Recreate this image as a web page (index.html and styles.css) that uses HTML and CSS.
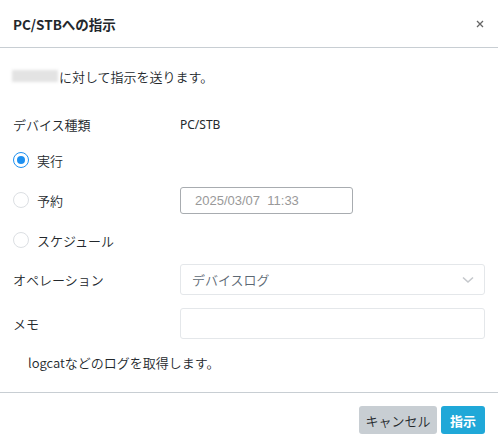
FILE: index.html
```html
<!DOCTYPE html>
<html lang="ja">
<head>
<meta charset="utf-8">
<link rel="stylesheet" href="styles.css">
</head>
<body>
<div class="modal">
  <div class="modal-header">
    <div class="title">PC/STBへの指示</div>
    <div class="close">
      <svg width="8" height="8" viewBox="0 0 8 8"><path d="M1 1L7 7M7 1L1 7" stroke="#666" stroke-width="1.3"/></svg>
    </div>
  </div>
  <div class="modal-body">
    <div class="row intro"><span class="blur"></span><span>に対して指示を送ります。</span></div>
    <div class="row device"><span class="label">デバイス種類</span><span class="value small">PC/STB</span></div>
    <div class="row radio-row r1"><span class="radio checked"></span><span>実行</span></div>
    <div class="row radio-row r2">
      <span class="label"><span class="radio"></span><span>予約</span></span>
      <div class="date-input">2025/03/07&nbsp;&nbsp;11:33</div>
    </div>
    <div class="row radio-row r3"><span class="radio"></span><span>スケジュール</span></div>
    <div class="row op">
      <span class="label">オペレーション</span>
      <div class="select">
        <span>デバイスログ</span>
        <svg width="12" height="8" viewBox="0 0 12 8"><path d="M1 1.5L6 6L11 1.5" fill="none" stroke="#c5c8cc" stroke-width="1.6"/></svg>
      </div>
    </div>
    <div class="row memo">
      <span class="label">メモ</span>
      <div class="text-input"></div>
    </div>
    <div class="row note">logcatなどのログを取得します。</div>
  </div>
  <div class="modal-footer">
    <button class="btn btn-cancel">キャンセル</button>
    <button class="btn btn-primary">指示</button>
  </div>
</div>
</body>
</html>
```
FILE: styles.css
```css
html, body {
  margin: 0;
  padding: 0;
  background: #fff;
}
body {
  font-family: "Noto Sans CJK JP", "Noto Sans", sans-serif;
  font-size: 13px;
  font-weight: 350;
  color: #23282c;
}
.modal {
  width: 498px;
  height: 448px;
  background: #fff;
}
.modal-header {
  height: 47px;
  border-bottom: 1px solid #c8ced3;
  display: flex;
  align-items: center;
  justify-content: space-between;
  padding: 0 14px 0 13px;
}
.title {
  font-weight: bold;
  font-size: 13.5px;
  color: #23282c;
}
.close {
  display: flex;
  align-items: center;
}
.modal-body {
  padding: 0 13px;
  height: 344px;
  box-sizing: border-box;
  padding-top: 14px;
}
.row {
  display: flex;
  align-items: center;
  height: 28px;
}
.label {
  width: 167px;
  flex: none;
  display: flex;
  align-items: center;
}
.value.small {
  font-size: 12px;
  font-family: "Noto Sans", sans-serif;
  font-weight: 400;
}
.blur {
  width: 46px;
  height: 12px;
  background: #e3e3e3;
  filter: blur(1.5px);
  margin-right: 1px;
  margin-left: -1px;
}
.device { margin-top: 20px; }
.r1 { margin-top: 8px; }
.r2 { margin-top: 12px; }
.r3 { margin-top: 12px; }
.radio {
  width: 16px;
  height: 16px;
  box-sizing: border-box;
  border: 1px solid #dcdfe3;
  border-radius: 50%;
  margin-right: 8px;
  flex: none;
  position: relative;
}
.radio.checked {
  border-color: #1e90f0;
}
.radio.checked::after {
  content: "";
  position: absolute;
  left: 3px;
  top: 3px;
  width: 8px;
  height: 8px;
  border-radius: 50%;
  background: #1e90f0;
}
.date-input {
  width: 173px;
  height: 27px;
  box-sizing: border-box;
  border: 1px solid #a8acb0;
  border-radius: 3px;
  font-family: "Liberation Sans", Arial, sans-serif;
  font-weight: 400;
  font-size: 13px;
  color: #999;
  padding-left: 14px;
  display: flex;
  align-items: center;
}
.op {
  height: 31px;
  margin-top: 10px;
}
.select {
  flex: 1;
  height: 31px;
  box-sizing: border-box;
  border: 1px solid #e4e7ea;
  border-radius: 3px;
  display: flex;
  align-items: center;
  justify-content: space-between;
  padding: 0 10px 0 11px;
  color: #5c6873;
}
.memo {
  height: 31px;
  margin-top: 13px;
}
.text-input {
  flex: 1;
  height: 31px;
  box-sizing: border-box;
  border: 1px solid #e4e7ea;
  border-radius: 3px;
}
.note {
  margin-top: 9px;
  padding-left: 15px;
}
.modal-footer {
  border-top: 1px solid #c8ced3;
  display: flex;
  justify-content: flex-end;
  gap: 4px;
  padding: 13px 13px 0;
}
.btn {
  height: 28px;
  border: none;
  border-radius: 3px;
  font-family: "Noto Sans CJK JP", sans-serif;
  font-size: 13px;
  font-weight: 350;
  padding: 0;
}
.btn-cancel {
  width: 78px;
  background: #c8ced3;
  color: #23282c;
}
.btn-primary {
  width: 44px;
  background: #20a8d8;
  color: #fff;
  font-weight: bold;
}
```
